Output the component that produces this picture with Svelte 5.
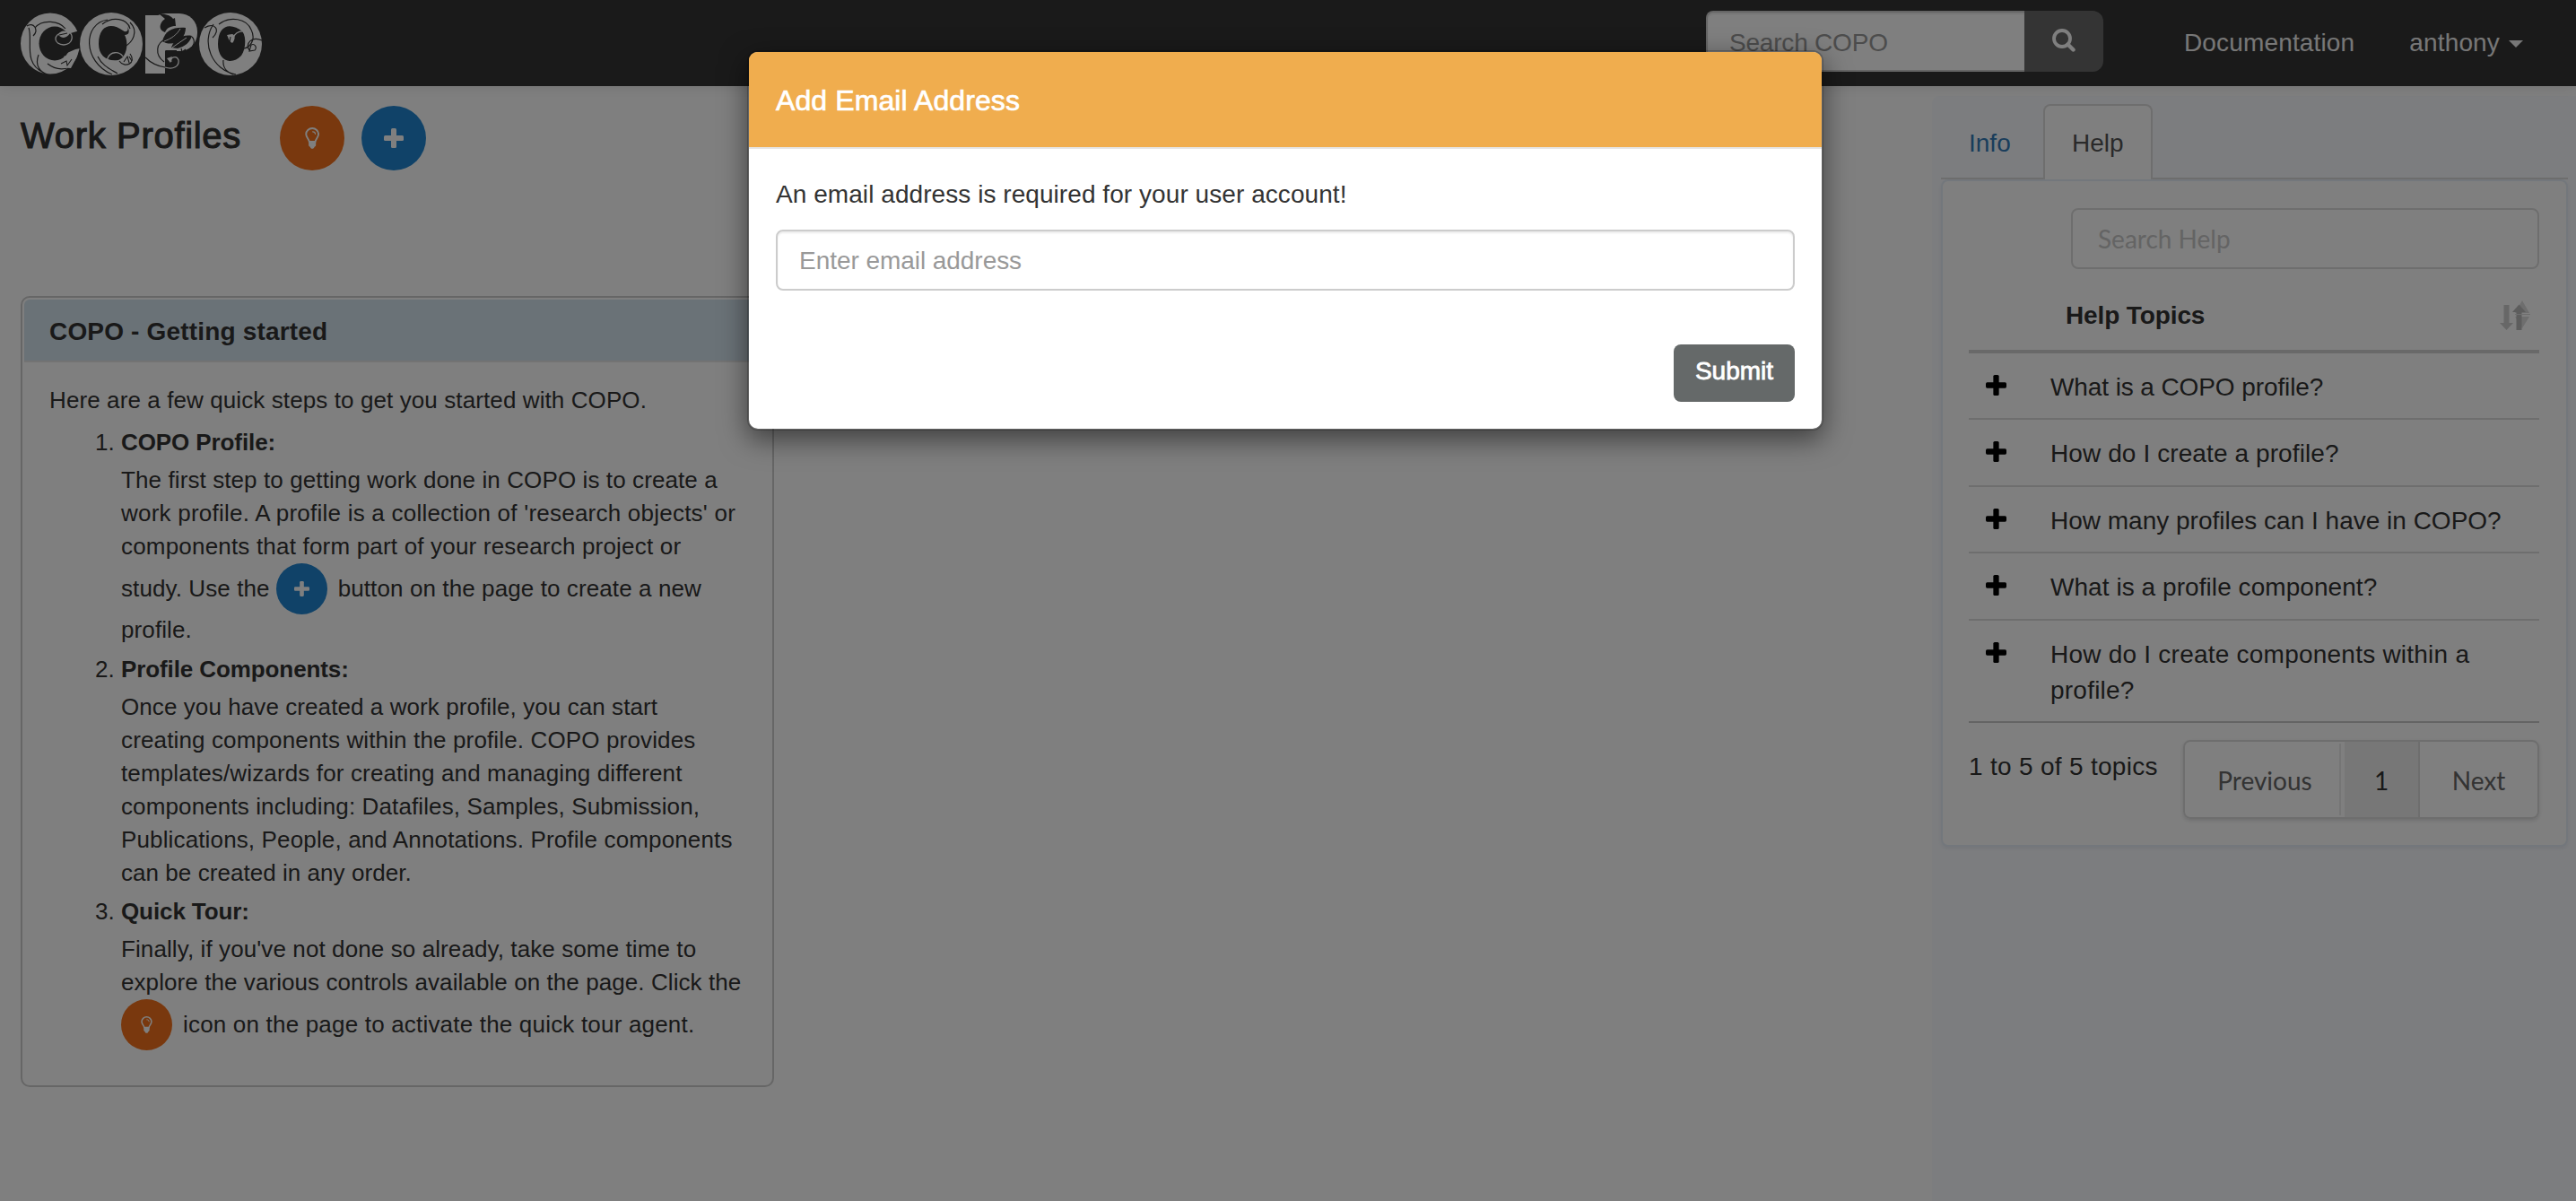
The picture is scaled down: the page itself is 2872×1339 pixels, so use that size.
<script>
  const topics = [
    ['What is a COPO profile?'],
    ['How do I create a profile?'],
    ['How many profiles can I have in COPO?'],
    ['What is a profile component?'],
    ['How do I create components within a', 'profile?']
  ];
  const spacing = [-0.1, 0.1, 0, 0.06, 0.23];

  const steps = [
    {
      title: 'COPO Profile:',
      lines: [
        { text: 'The first step to getting work done in COPO is to create a', ls: 0.1 },
        { text: "work profile. A profile is a collection of 'research objects' or", ls: 0.23 },
        { text: 'components that form part of your research project or', ls: 0.19 },
        { before: 'study. Use the', icon: 'plus', text: 'button on the page to create a new', ls: 0.1 },
        { text: 'profile.', ls: 0.1 }
      ]
    },
    {
      title: 'Profile Components:',
      lines: [
        { text: 'Once you have created a work profile, you can start', ls: 0.08 },
        { text: 'creating components within the profile. COPO provides', ls: 0.14 },
        { text: 'templates/wizards for creating and managing different', ls: 0.14 },
        { text: 'components including: Datafiles, Samples, Submission,', ls: 0.12 },
        { text: 'Publications, People, and Annotations. Profile components', ls: 0.14 },
        { text: 'can be created in any order.', ls: 0.05 }
      ]
    },
    {
      title: 'Quick Tour:',
      lines: [
        { text: "Finally, if you've not done so already, take some time to", ls: 0.1 },
        { text: 'explore the various controls available on the page. Click the', ls: 0.08 },
        { icon: 'bulb', text: 'icon on the page to activate the quick tour agent.', ls: 0.19 }
      ]
    }
  ];
</script>

{#snippet plus(size)}
  <svg width={size} height={size} viewBox="0 0 22 22" fill="currentColor">
    <rect x="8" y="0" width="6" height="22" rx="1.5" />
    <rect x="0" y="8" width="22" height="6" rx="1.5" />
  </svg>
{/snippet}

{#snippet bulb(h)}
  <svg width={(h * 17) / 25} height={h} viewBox="0 0 17 25" fill="none">
    <path d="M5 16.5C4.6 13.6 1.3 11.6 1.3 7.8a7.2 6.7 0 0 1 14.4 0c0 3.8-3.3 5.8-3.7 8.7z" stroke="currentColor" stroke-width="2" />
    <path d="M9 5c1.8 0 2.9.9 3 2.6" stroke="currentColor" stroke-width="1.3" stroke-linecap="round" />
    <path d="M4.3 16.2h8.4v4.3c0 1-.9 1.6-1.7 2.1-.4 1.4-1.2 2.1-2.5 2.1s-2.1-.7-2.5-2.1c-.8-.5-1.7-1.1-1.7-2.1z" fill="currentColor" />
  </svg>
{/snippet}

<div class="page">
  <nav>
    <svg class="logo" width="290" height="90" viewBox="0 0 290 90" fill="none" role="img" aria-label="COPO">
      <g fill="#fff">
        <ellipse cx="41" cy="43.5" rx="33" ry="34" />
        <ellipse cx="109" cy="44" rx="35" ry="35" />
        <rect x="147" y="12" width="22" height="65" />
        <rect x="150" y="10" width="55" height="42" rx="20" />
        <ellipse cx="242" cy="44" rx="35" ry="35" />
      </g>
      <g fill="#343434">
        <ellipse cx="46" cy="43.5" rx="17.5" ry="19" />
        <path d="M50 36l24-7v20l-5 1-16 7z" />
        <path d="M95 44c0-22 15-24 27-15 4 3 7 0 5-5 3 6 2 10-3 10 5 10 2 25-7 28-13 2-22-5-22-18z" />
        <path d="M228 44c0-22 15-24 27-14 4 4 5 18-1 27-10 11-26 7-26-13z" />
        <path d="M166 41c3-12 12-16 26-15 0 10-8 20-22 17z" />
        <path d="M163 11c7-1 13 2 15 5l2-1 1 9c-6 0-10 2-12 7-9-3-5-12 0-15-2-2-4-3-6-5z" />
        <path d="M176 48c3-9 12-15 23-13-2 7-8 12-16 14z" />
        <path d="M169 51h13v3h-11z" />
      </g>
      <g stroke="#343434" stroke-width="1.2">
        <path d="M15 24c7-5 14 4 7 11M17 26C22 39 10 66 34 76M24 26C32 16 51 18 58 27M28 56C23 69 31 76 38 78M38 66c9 7 22 9 30-1" />
        <path d="M105 17c-28 4-28 47 5 61M99 22c11-9 28-7 31 5M130 20c10 10 3 22-6 27M94 58c5 11 16 15 22 19M118 63c6 9 20 2 12-8" />
        <path d="M213 26c12-7 18 3 9 11M223 22c-14 20-2 51 25 56M229 22c13-10 31-6 36 6 6 12-2 20-8 21M234 62c-1 9 5 14 11 16M277 40c-11-5-19 3-14 11" />
        <path d="M147 59c8 8 15 10 22 11M168 64c-11-8-9-22 2-25M199 36c4 4 3 11-4 15" />
      </g>
      <g stroke="#fff" stroke-width="1">
        <path d="M168 41c8-3 14-7 18-14M177 48l16-11" />
      </g>
      <g stroke="#fff" stroke-width="1.3">
        <path d="M59 29c10 4 7 16-3 16-11 0-13-12 0-14M119 66c-4 9-17 2-14-6 3-8 13-8 17-2M169 70c9 3 16-1 15-8-2-6-10-3-8 2M258 30c-7-1-11 2-13 7" />
      </g>
      <g fill="#fff">
        <path d="M50 34c3-6 8-5 13-2-3 5-8 7-13 2zM238 34c2 4 2 7 6 9 4-5 3-9 0-10zM171 60l6-2-2 7z" />
        <path d="M53 65l4-8 4 3 10-2-7 13-15-1z" />
      </g>
      <g stroke="#343434" stroke-width="1.1">
        <path d="M51 34l9-2M241 42l1-6M53 66l6-3 1 5 5-7M123 64l4-6 2 7M129 58l3 5M187 49l1 4 4-3M269 51l-6 1 2-7c4-2 7 3 4 6z" />
      </g>
    </svg>
    <div class="search">
      <div class="search-input">Search COPO</div>
      <div class="search-btn">
        <svg width="26" height="26" viewBox="0 0 26 26" fill="none" stroke="#fff">
          <circle cx="11" cy="11" r="9" stroke-width="3.8" />
          <path d="M17.5 17.5l6 6" stroke-width="4.4" stroke-linecap="round" />
        </svg>
      </div>
    </div>
    <span class="link docs">Documentation</span>
    <span class="link">anthony</span>
    <i class="caret"></i>
  </nav>

  <main>
    <section class="left">
      <div class="heading">
        <h2>Work Profiles</h2>
        <span class="circle orange">{@render bulb(24)}</span>
        <span class="circle blue">{@render plus(22)}</span>
      </div>

      <div class="card">
        <div class="card-head">COPO - Getting started</div>
        <div class="card-body">
          <p>Here are a few quick steps to get you started with COPO.</p>
          {#each steps as step, i}
            <div class="step">
              <span class="num">{i + 1}.</span>
              <div>
                <b>{step.title}</b>
                <div class="lines">
                  {#each step.lines as l}
                    {#if l.icon}
                      <div class="line with-icon" style="letter-spacing:{l.ls}px">
                        {#if l.before}<span class="before">{l.before}</span>{/if}
                        <span class="circle small {l.icon === 'plus' ? 'blue' : 'orange'}">
                          {#if l.icon === 'plus'}{@render plus(17)}{:else}{@render bulb(19)}{/if}
                        </span>
                        <span class="after">{l.text}</span>
                      </div>
                    {:else}
                      <div class="line" style="letter-spacing:{l.ls}px">{l.text}</div>
                    {/if}
                  {/each}
                </div>
              </div>
            </div>
          {/each}
        </div>
      </div>
    </section>

    <aside>
      <div class="tabs">
        <span class="tab info">Info</span>
        <span class="tab active">Help</span>
      </div>
      <div class="panel">
        <div class="help-search">Search Help</div>
        <div class="thead">
          <span>Help Topics</span>
          <svg width="34" height="38" viewBox="0 0 34 38">
            <path d="M25 0l8 14H17zM17 18h16l-8 13z" fill="#dcdcdc" />
            <path d="M4.500 5h6v20h4.500L7.500 33 0 25h4.500z" fill="#cfcfcf" />
            <path d="M18.500 33V13H14l7.500-8.500L29 13h-4.500v20z" fill="#bababa" />
            <path d="M17 15.500h17" stroke="#ddd" />
          </svg>
        </div>
        {#each topics as t, i}
          <div class="row" class:last={i === topics.length - 1}>
            <span class="plus">{@render plus(23)}</span>
            <div class="topic" style="letter-spacing:{spacing[i]}px">
              {#each t as l}<div>{l}</div>{/each}
            </div>
          </div>
        {/each}
        <div class="foot">
          <span class="count">1 to 5 of 5 topics</span>
          <div class="pager">
            <span class="prev">Previous</span>
            <span class="cur">1</span>
            <span class="next">Next</span>
          </div>
        </div>
      </div>
    </aside>
  </main>

  <div class="backdrop"></div>
  <div class="modal">
    <div class="modal-head">Add Email Address</div>
    <div class="modal-body">
      <div class="msg">An email address is required for your user account!</div>
      <div class="email">Enter email address</div>
      <div class="submit">Submit</div>
    </div>
  </div>
</div>

<style>
  :global(body) { overflow: hidden; }
  .page, .page * { box-sizing: border-box; }
  .page {
    position: relative;
    width: 2872px;
    height: 1339px;
    overflow: hidden;
    background: #fff;
    color: #333;
    font: 28px/40px 'Liberation Sans', Arial, sans-serif;
    white-space: nowrap;
  }
  svg { display: block; flex: none; }
  nav {
    position: relative;
    z-index: 1;
    height: 96px;
    display: flex;
    background: #343434;
    box-shadow: 0 2px 14px rgba(0, 0, 0, 0.09);
  }
  .logo { margin: 5px 1597px 0 15px; }
  .search { display: flex; width: 443px; height: 68px; margin-top: 12px; }
  .search-input {
    width: 355px;
    border: 2px solid #ccc;
    border-right: 0;
    border-radius: 8px 0 0 8px;
    background: #fff;
    box-shadow: inset 0 2px 2px rgba(0, 0, 0, 0.075);
    color: #999;
    padding: 14px 24px;
    letter-spacing: -0.2px;
  }
  .search-btn {
    width: 88px;
    border-radius: 0 12px 12px 0;
    background: #696969;
    padding: 20px 0 0 31px;
  }
  .link { color: #eee; margin: 28px 0 0 61px; letter-spacing: 0.15px; }
  .link.docs { margin-left: 90px; }
  .caret {
    margin: 45px 0 0 10px;
    width: 0;
    height: 0;
    border: 8px solid transparent;
    border-top-color: #eee;
    border-bottom: 0;
  }

  main { display: flex; height: 1243px; }
  .left { width: 2154px; padding-left: 23px; }
  .heading { display: flex; height: 234px; padding-top: 22px; }
  h2 {
    width: 289px;
    margin: 11px 0 0;
    font-size: 40px;
    line-height: 44px;
    font-weight: 400;
    letter-spacing: 0.68px;
    -webkit-text-stroke: 1.1px #333;
  }
  .circle {
    flex: none;
    width: 72px;
    height: 72px;
    border-radius: 50%;
    display: flex;
    align-items: center;
    justify-content: center;
    color: #fff;
  }
  .circle + .circle { margin-left: 19px; }
  .orange { background: #f2711c; }
  .blue { background: #2185d0; }
  .small { width: 57px; height: 57px; }

  .card {
    width: 840px;
    height: 882px;
    border: 2px solid #ccc;
    border-radius: 10px;
    padding: 2px;
    font-size: 26px;
    line-height: 37px;
  }
  .card-head {
    height: 70px;
    border-bottom: 2px solid #e6e6e6;
    border-radius: 6px 6px 0 0;
    background: #d4e4ee;
    padding: 17px 0 0 28px;
    font-size: 28px;
    font-weight: 700;
    letter-spacing: 0.17px;
  }
  .card-body { padding: 24px 0 0 28px; }
  p { margin: 0 0 10px; letter-spacing: 0.1px; }
  .step { display: flex; padding-left: 51px; margin-bottom: 7px; }
  .step:nth-child(3) .lines { margin-bottom: -1px; }
  .num { width: 29px; }
  b { display: block; letter-spacing: -0.1px; margin-bottom: 5px; }
  .with-icon { display: flex; align-items: center; height: 56px; }
  .before { margin-right: 7px; }
  .after { margin-left: 12px; }

  aside {
    width: 718px;
    margin-top: 11px;
    padding: 9px 9px 0 10px;
    background: #f9fbff;
    border-radius: 8px 0 0 0;
  }
  .tabs { display: flex; height: 84px; border-bottom: 2px solid #ddd; }
  .tab { height: 84px; padding-top: 24px; }
  .info { width: 114px; padding-left: 31px; color: #337ab7; }
  .active {
    width: 122px;
    padding: 22px 0 0 30px;
    border: 2px solid #ddd;
    border-bottom: 0;
    border-radius: 8px 8px 0 0;
    background: #fff;
    color: #555;
  }
  .panel {
    height: 744px;
    border: 2px solid #e6eff8;
    border-radius: 8px;
    background: #fff;
    box-shadow: 0 2px 4px rgba(80, 110, 150, 0.1);
    padding: 30px 30px 0 29px;
  }
  .help-search {
    width: 522px;
    height: 68px;
    margin-left: auto;
    border: 2px solid #ddd;
    border-radius: 8px;
    padding: 12px 28px;
    color: #c8c8c8;
    font-family: Lato, sans-serif;
  }
  .thead {
    display: flex;
    justify-content: space-between;
    height: 94px;
    padding: 32px 10px 0 108px;
    border-bottom: 4px solid #d2d2d2;
    font-weight: 700;
    letter-spacing: -0.12px;
  }
  .thead svg { margin-top: 3px; }
  .row {
    display: flex;
    height: 74.4px;
    padding: 18px 0 0 19px;
    border-bottom: 2px solid #ddd;
  }
  .row.last { height: 114.4px; border-color: #c8c8c8; }
  .plus { width: 72px; padding-top: 6px; color: #000; }
  .foot { display: flex; justify-content: space-between; }
  .count { margin-top: 29px; letter-spacing: 0.3px; }
  .pager {
    display: flex;
    width: 397px;
    height: 88px;
    margin-top: 19px;
    border: 2px solid #ddd;
    border-radius: 8px;
    box-shadow: 0 2px 4px rgba(34, 36, 38, 0.15);
    font-family: Lato, sans-serif;
    color: #666;
    line-height: 86px;
    text-align: center;
  }
  .prev { width: 174px; height: 80px; margin: 2px 4px 0 0; line-height: 82px; border-right: 2px solid #eaeaea; padding-left: 6px; }
  .cur { width: 84px; background: #efefef; border-right: 2px solid #dcdcdc; color: #333; }
  .next { flex: 1; }

  .backdrop { position: absolute; inset: 0; z-index: 2; background: rgba(0, 0, 0, 0.5); }
  .modal {
    position: absolute;
    z-index: 3;
    left: 833px;
    top: 56px;
    width: 1200px;
    height: 424px;
    border: 2px solid rgba(0, 0, 0, 0.2);
    border-radius: 12px;
    background: #fff;
    background-clip: padding-box;
    box-shadow: 0 10px 30px rgba(0, 0, 0, 0.5);
  }
  .modal-head {
    height: 108px;
    border-bottom: 2px solid #e5e5e5;
    border-radius: 9px 9px 0 0;
    background: #f0ad4e;
    color: #fff;
    padding: 32px 30px;
    font-size: 32px;
    line-height: 44px;
    letter-spacing: 0.1px;
    -webkit-text-stroke: 0.7px #fff;
  }
  .modal-body { padding: 31px 30px; display: flex; flex-direction: column; }
  .msg { letter-spacing: 0.06px; }
  .email {
    height: 68px;
    margin-top: 19px;
    border: 2px solid #ccc;
    border-radius: 8px;
    box-shadow: inset 0 2px 2px rgba(0, 0, 0, 0.075);
    padding: 13px 24px;
    color: #999;
    letter-spacing: -0.05px;
  }
  .submit {
    align-self: flex-end;
    width: 135px;
    height: 64px;
    margin-top: 60px;
    border-radius: 8px;
    background: #656969;
    color: #fff;
    padding-top: 10px;
    text-align: center;
    -webkit-text-stroke: 0.8px #fff;
  }
</style>
